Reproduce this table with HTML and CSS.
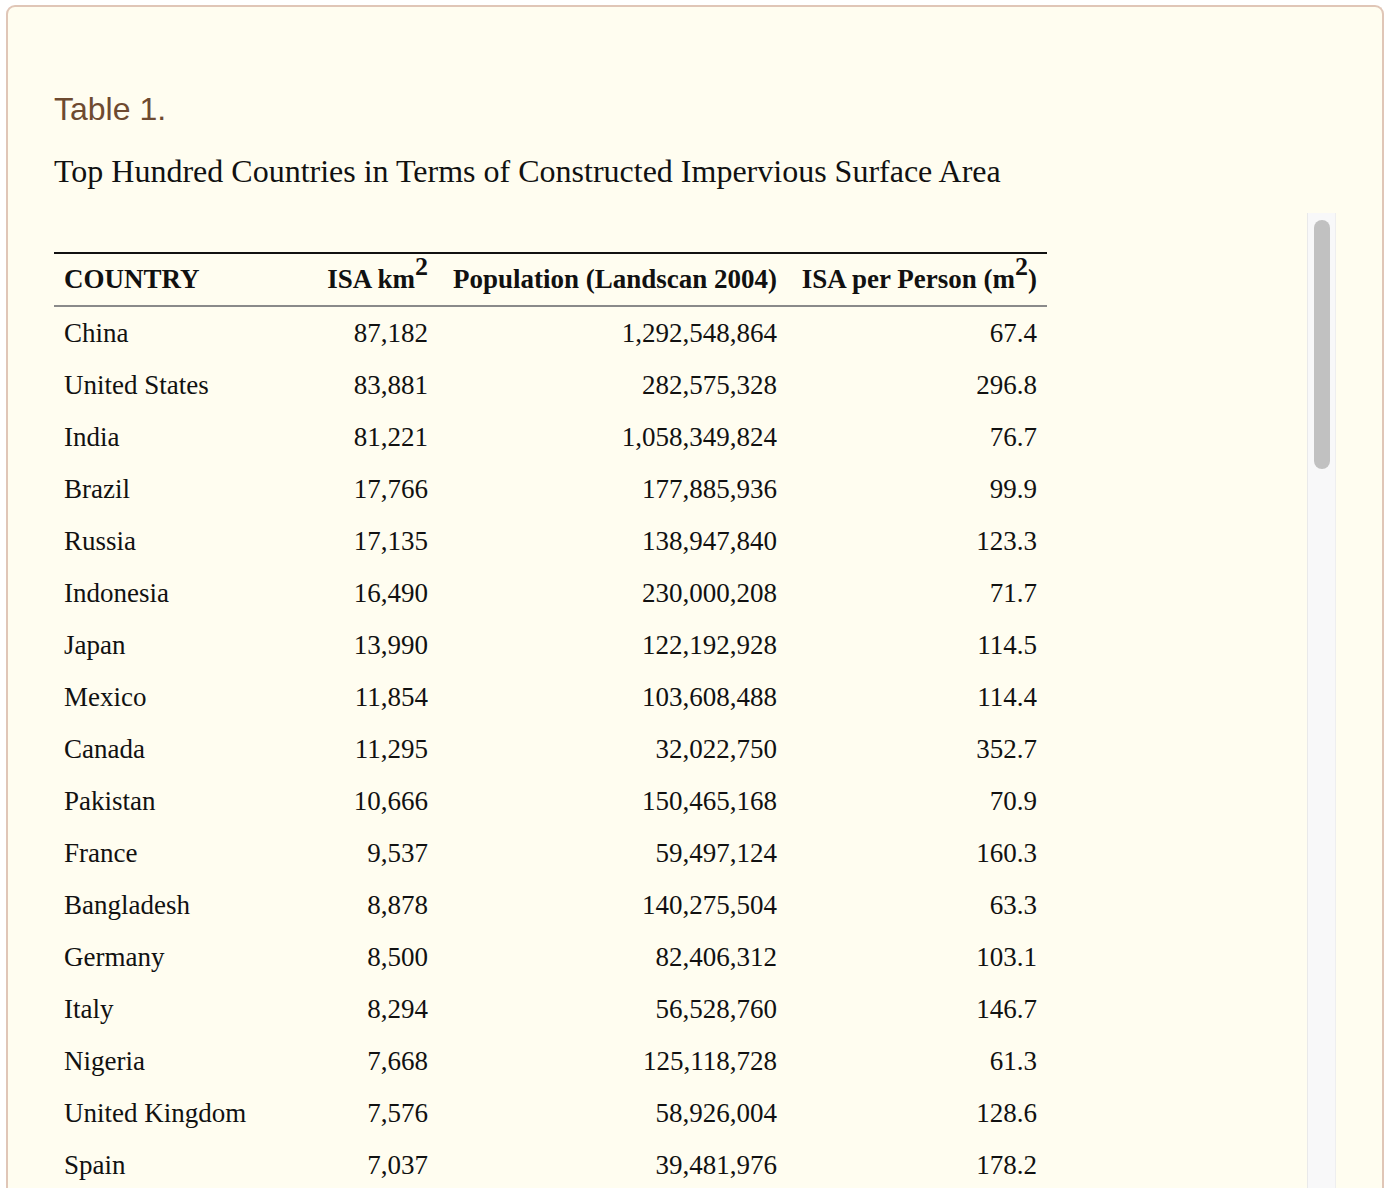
FILE: index.html
```html
<!DOCTYPE html>
<html>
<head>
<meta charset="utf-8">
<link rel="stylesheet" href="styles.css">
</head>
<body>
<div class="panel">
  <h2 class="label">Table 1.</h2>
  <p class="caption">Top Hundred Countries in Terms of Constructed Impervious Surface Area</p>
  <div class="scroll-area">
    <div class="viewport">
    <table class="data">
      <colgroup>
        <col class="c1"><col class="c2"><col class="c3"><col class="c4">
      </colgroup>
      <thead>
        <tr>
          <th class="left">COUNTRY</th>
          <th>ISA km<sup>2</sup></th>
          <th>Population (Landscan 2004)</th>
          <th>ISA per Person (m<sup>2</sup>)</th>
        </tr>
      </thead>
      <tbody>
        <tr><td class="left">China</td><td>87,182</td><td>1,292,548,864</td><td>67.4</td></tr>
        <tr><td class="left">United States</td><td>83,881</td><td>282,575,328</td><td>296.8</td></tr>
        <tr><td class="left">India</td><td>81,221</td><td>1,058,349,824</td><td>76.7</td></tr>
        <tr><td class="left">Brazil</td><td>17,766</td><td>177,885,936</td><td>99.9</td></tr>
        <tr><td class="left">Russia</td><td>17,135</td><td>138,947,840</td><td>123.3</td></tr>
        <tr><td class="left">Indonesia</td><td>16,490</td><td>230,000,208</td><td>71.7</td></tr>
        <tr><td class="left">Japan</td><td>13,990</td><td>122,192,928</td><td>114.5</td></tr>
        <tr><td class="left">Mexico</td><td>11,854</td><td>103,608,488</td><td>114.4</td></tr>
        <tr><td class="left">Canada</td><td>11,295</td><td>32,022,750</td><td>352.7</td></tr>
        <tr><td class="left">Pakistan</td><td>10,666</td><td>150,465,168</td><td>70.9</td></tr>
        <tr><td class="left">France</td><td>9,537</td><td>59,497,124</td><td>160.3</td></tr>
        <tr><td class="left">Bangladesh</td><td>8,878</td><td>140,275,504</td><td>63.3</td></tr>
        <tr><td class="left">Germany</td><td>8,500</td><td>82,406,312</td><td>103.1</td></tr>
        <tr><td class="left">Italy</td><td>8,294</td><td>56,528,760</td><td>146.7</td></tr>
        <tr><td class="left">Nigeria</td><td>7,668</td><td>125,118,728</td><td>61.3</td></tr>
        <tr><td class="left">United Kingdom</td><td>7,576</td><td>58,926,004</td><td>128.6</td></tr>
        <tr><td class="left">Spain</td><td>7,037</td><td>39,481,976</td><td>178.2</td></tr>
      </tbody>
    </table>
    </div>
    <div class="track"><div class="thumb"></div></div>
  </div>
</div>
</body>
</html>
```
FILE: styles.css
```css
html, body {
  margin: 0;
  padding: 0;
  background: #ffffff;
}
body {
  padding: 5px 10px 0 6px;
  height: 1188px;
  overflow: hidden;
  box-sizing: border-box;
}
.panel {
  background: #fffdf0;
  border: 2px solid #e0c6b7;
  border-bottom: none;
  border-radius: 9px 9px 0 0;
  padding: 84px 46px 0 46px;
  height: 1200px;
  box-sizing: border-box;
}
.label {
  margin: 0;
  font-family: "Liberation Sans", Arial, sans-serif;
  font-weight: normal;
  font-size: 32px;
  line-height: 36px;
  color: #6e4a30;
}
.caption {
  margin: 25px 0 0 0;
  font-family: "Liberation Serif", "Times New Roman", serif;
  font-size: 32px;
  line-height: 38px;
  color: #111;
}
.scroll-area {
  display: flex;
  margin-top: 23px;
  height: 1100px;
}
.viewport {
  flex: 1;
  overflow: hidden;
  padding-top: 39px;
}
.track {
  width: 16px;
  flex: none;
  background: #f8f8f9;
  border-left: 1px solid #e9e9ea;
  border-right: 1px solid #eeeeef;
  padding: 7px 5px 0 6px;
  box-sizing: content-box;
}
.thumb {
  height: 249px;
  border-radius: 8px;
  background: #c1c1c1;
}
.data {
  border-collapse: collapse;
  font-family: "Liberation Serif", "Times New Roman", serif;
  font-size: 27px;
  color: #111;
  table-layout: fixed;
  width: 993px;
}
.c1 { width: 261px; }
.c2 { width: 123px; }
.c3 { width: 349px; }
.c4 { width: 260px; }
.data thead tr {
  border-top: 2px solid #111;
  border-bottom: 2px solid #8a8a8a;
}
.data th {
  font-weight: bold;
  height: 51px;
  padding: 0 10px 0 10px;
  text-align: right;
  white-space: nowrap;
  vertical-align: middle;
}
.data th sup {
  font-size: 26px;
  line-height: 0;
  vertical-align: 0.5em;
}
.data td {
  height: 52px;
  padding: 0 10px 0 10px;
  text-align: right;
  white-space: nowrap;
  vertical-align: middle;
}
.data .left {
  text-align: left;
}
```
